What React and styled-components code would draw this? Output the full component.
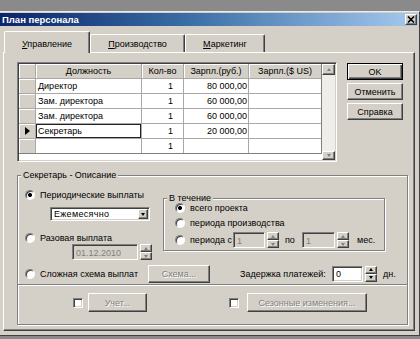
import React from 'react'
import styled, { createGlobalStyle, css } from 'styled-components'

const FACE = '#d4d0c8'
const SHADOW = '#808080'
const DARK = '#404040'
const LIGHT = '#ffffff'

const GlobalStyle = createGlobalStyle`
  html, body {
    margin: 0;
    padding: 0;
  }
  body {
    background: #8a8a8a;
    font-family: "Liberation Sans", Arial, sans-serif;
    font-size: 9px;
    color: #000;
  }
`

const raised = css`
  border: 1px solid;
  border-color: ${LIGHT} ${DARK} ${DARK} ${LIGHT};
  box-shadow: inset -1px -1px 0 ${SHADOW};
`

const sunken = css`
  border: 1px solid;
  border-color: ${SHADOW} ${LIGHT} ${LIGHT} ${SHADOW};
  box-shadow: inset 1px 1px 0 ${DARK}, inset -1px -1px 0 ${FACE};
`

const Screen = styled.div`
  width: 420px;
  height: 339px;
  box-sizing: border-box;
  padding-top: 11px;
  background: #8a8a8a;
  overflow: hidden;
`

const Window = styled.div`
  box-sizing: border-box;
  height: 325px;
  background: ${FACE};
  border-top: 1px solid #ecebe7;
  border-right: 1px solid ${DARK};
  border-bottom: 1px solid ${DARK};
  padding: 1px 1px 0 0;
`

const TitleBar = styled.div`
  height: 13px;
  display: flex;
  align-items: center;
  justify-content: space-between;
  padding: 0 1px 0 2px;
  background: linear-gradient(to right, #0a246a 0%, #3a6ea5 45%, #a6caf0 100%);
`

const TitleText = styled.span`
  color: #fff;
  font-weight: bold;
  font-size: 9.5px;
  white-space: nowrap;
`

const CloseButton = styled.div`
  box-sizing: border-box;
  width: 12px;
  height: 11px;
  background: ${FACE};
  ${raised};
  display: flex;
  align-items: center;
  justify-content: center;
`

const TabRow = styled.div`
  height: 21px;
  margin-top: 5px;
  padding-left: 4px;
  display: flex;
  align-items: flex-end;
`

const Tab = styled.div`
  box-sizing: border-box;
  width: ${p => p.$w}px;
  height: ${p => (p.$active ? 22 : 18)}px;
  margin-bottom: ${p => (p.$active ? -1 : 0)}px;
  position: relative;
  z-index: ${p => (p.$active ? 1 : 0)};
  display: flex;
  align-items: center;
  justify-content: center;
  padding-top: ${p => (p.$active ? 3 : 1)}px;
  background: ${FACE};
  border-top: 1px solid ${LIGHT};
  border-left: 1px solid ${LIGHT};
  border-right: 1px solid ${DARK};
  box-shadow: inset -1px 0 0 ${SHADOW};
  border-radius: 2px 2px 0 0;
  white-space: nowrap;
`

const Panel = styled.div`
  box-sizing: border-box;
  height: 279px;
  margin: 0 3px 0 3px;
  ${raised};
  padding: 9px 5px 0 13px;
`

const TopRow = styled.div`
  display: flex;
  align-items: flex-start;
  gap: 10px;
`

const DataGrid = styled.div`
  box-sizing: border-box;
  width: 320px;
  height: 100px;
  padding: 1px;
  background: #fff;
  ${sunken};
  display: flex;
`

const Table = styled.div`
  width: 303px;
  box-sizing: border-box;
  align-self: flex-start;
  display: grid;
  grid-template-columns: 16px 105px 41px 64px 72px;
  grid-auto-rows: 14px;
  gap: 1px;
  background: #a8a8a8;
  border-right: 1px solid ${SHADOW};
  border-bottom: 1px solid ${SHADOW};
`

const HeadCell = styled.div`
  background: ${FACE};
  box-shadow: inset 1px 1px 0 ${LIGHT};
  display: flex;
  align-items: center;
  justify-content: center;
  white-space: nowrap;
  overflow: hidden;
`

const Cell = styled.div`
  background: #fff;
  display: flex;
  align-items: center;
  justify-content: ${p => (p.$right ? 'flex-end' : 'flex-start')};
  padding: 0 ${p => p.$pr ?? 2}px 0 2px;
  white-space: nowrap;
  overflow: hidden;
  ${p => p.$focus && css`box-shadow: inset 0 0 0 1px #222;`}
`

const ScrollBar = styled.div`
  width: 13px;
  background: #efeeea;
  display: flex;
  flex-direction: column;
  justify-content: space-between;
`

const ArrowBtn = styled.div`
  box-sizing: border-box;
  height: ${p => p.$h ?? 11}px;
  width: ${p => (p.$w ? `${p.$w}px` : 'auto')};
  flex: ${p => (p.$grow ? 1 : 'none')};
  background: ${FACE};
  ${raised};
  display: flex;
  align-items: center;
  justify-content: center;
  &::after {
    content: '';
    border-left: 2.5px solid transparent;
    border-right: 2.5px solid transparent;
    ${p => (p.$down
      ? css`border-top: 3px solid ${p.$off ? SHADOW : '#000'};`
      : css`border-bottom: 3px solid ${p.$off ? SHADOW : '#000'};`)}
  }
`

const ButtonColumn = styled.div`
  width: 56px;
  margin-top: 1px;
  display: flex;
  flex-direction: column;
  gap: 3px;
`

const Button = styled.button`
  box-sizing: border-box;
  width: ${p => p.$w}px;
  height: ${p => p.$h ?? 17}px;
  flex: none;
  padding: 0;
  font: inherit;
  background: ${FACE};
  ${raised};
  color: ${p => (p.disabled ? SHADOW : '#000')};
  text-shadow: ${p => (p.disabled ? `1px 1px 0 ${LIGHT}` : 'none')};
  white-space: nowrap;
  ${p => p.$default && css`
    border-color: #000;
    box-shadow: inset 1px 1px 0 ${LIGHT}, inset -1px -1px 0 ${DARK}, inset -2px -2px 0 ${SHADOW};
  `}
`

const GroupBox = styled.fieldset`
  box-sizing: border-box;
  width: ${p => p.$w}px;
  min-width: 0;
  margin: ${p => p.$mt}px 0 0 0;
  padding: 0;
  border: 1px solid ${SHADOW};
  box-shadow: 1px 1px 0 ${LIGHT}, inset 1px 1px 0 ${LIGHT};
`

const Legend = styled.legend`
  margin-left: 3px;
  padding: 0 2px;
  line-height: ${p => p.$lh}px;
  background: ${FACE};
  white-space: nowrap;
`

const TopArea = styled.div`
  display: flex;
  align-items: flex-start;
  padding: 8px 0 0 7px;
`

const LeftCol = styled.div`
  width: 138px;
  display: flex;
  flex-direction: column;
  align-items: flex-start;
`

const RadioRow = styled.div`
  display: flex;
  align-items: center;
  gap: 5px;
  height: ${p => p.$h ?? 12}px;
  margin-top: ${p => p.$mt ?? 0}px;
  width: ${p => (p.$w ? `${p.$w}px` : 'auto')};
  flex: none;
  white-space: nowrap;
`

const Radio = styled.span`
  box-sizing: border-box;
  width: 10px;
  height: 10px;
  flex: none;
  border-radius: 50%;
  border: 1px solid;
  border-color: ${SHADOW} ${LIGHT} ${LIGHT} ${SHADOW};
  box-shadow: inset 1px 1px 0 ${DARK};
  background: ${p => (p.$checked
    ? 'radial-gradient(circle at 50% 50%, #000 0 1.7px, #fff 2.3px)'
    : '#fff')};
`

const SelectBox = styled.div`
  box-sizing: border-box;
  width: 100px;
  height: 14px;
  margin: 6px 0 0 25px;
  padding: 1px;
  background: #fff;
  ${sunken};
  display: flex;
  align-items: stretch;
`

const SelectText = styled.span`
  flex: 1;
  display: flex;
  align-items: center;
  padding-left: 2px;
  letter-spacing: 0.3px;
`

const SpinGroup = styled.div`
  display: flex;
  gap: 2px;
  flex: none;
  margin: ${p => p.$m ?? '0'};
`

const Field = styled.div`
  box-sizing: border-box;
  width: ${p => p.$w}px;
  height: 16px;
  padding: 1px 3px 0;
  background: ${p => (p.$off ? FACE : '#fff')};
  color: ${p => (p.$off ? SHADOW : '#000')};
  ${sunken};
  display: flex;
  align-items: center;
`

const Spinner = styled.div`
  width: 12px;
  height: 16px;
  display: flex;
  flex-direction: column;
`

const InnerArea = styled.div`
  display: flex;
  flex-direction: column;
  padding: 0 0 2px 11px;
`

const Text = styled.span`
  flex: none;
  width: ${p => (p.$w ? `${p.$w}px` : 'auto')};
  margin-left: ${p => p.$ml ?? 0}px;
  white-space: nowrap;
`

const SchemeRow = styled.div`
  display: flex;
  align-items: center;
  height: 19px;
  margin-top: 4px;
  padding-left: 7px;
`

const BottomSection = styled.div`
  margin-top: 1px;
  border-top: 1px solid ${SHADOW};
  box-shadow: inset 0 1px 0 ${LIGHT};
  padding: 8px 0 12px 55px;
  display: flex;
  align-items: center;
`

const CheckBox = styled.span`
  box-sizing: border-box;
  width: 10px;
  height: 10px;
  flex: none;
  margin-right: ${p => p.$mr}px;
  margin-left: ${p => p.$ml ?? 0}px;
  background: #fff;
  ${sunken};
`

const rows = [
  { name: 'Директор', qty: '1', rub: '80 000,00' },
  { name: 'Зам. директора', qty: '1', rub: '60 000,00' },
  { name: 'Зам. директора', qty: '1', rub: '60 000,00' },
  { name: 'Секретарь', qty: '1', rub: '20 000,00', current: true },
  { name: '', qty: '1', rub: '' },
]

const CloseIcon = () => (
  <svg width="8" height="7" viewBox="0 0 8 7">
    <path d="M1 0.5 L7 6.5 M7 0.5 L1 6.5" stroke="#000" strokeWidth="1.6" />
  </svg>
)

const RowArrow = () => (
  <svg width="5" height="8" viewBox="0 0 5 8">
    <polygon points="0,0 5,4 0,8" fill="#000" />
  </svg>
)

const Spin = ({ off }) => (
  <Spinner>
    <ArrowBtn $grow $off={off} />
    <ArrowBtn $grow $down $off={off} />
  </Spinner>
)

export default function App() {
  return (
    <Screen>
      <GlobalStyle />
      <Window>
        <TitleBar>
          <TitleText>План персонала</TitleText>
          <CloseButton><CloseIcon /></CloseButton>
        </TitleBar>

        <TabRow>
          <Tab $w={86} $active><span><u>У</u>правление</span></Tab>
          <Tab $w={95}><span><u>П</u>роизводство</span></Tab>
          <Tab $w={80}><span><u>М</u>аркетинг</span></Tab>
        </TabRow>

        <Panel>
          <TopRow>
            <DataGrid>
              <Table>
                <HeadCell />
                <HeadCell>Должность</HeadCell>
                <HeadCell>Кол-во</HeadCell>
                <HeadCell>Зарпл.(руб.)</HeadCell>
                <HeadCell>Зарпл.($ US)</HeadCell>
                {rows.map((r, i) => (
                  <React.Fragment key={i}>
                    <HeadCell>{r.current && <RowArrow />}</HeadCell>
                    <Cell $focus={r.current}>{r.name}</Cell>
                    <Cell $right $pr={10}>{r.qty}</Cell>
                    <Cell $right $pr={1}>{r.rub}</Cell>
                    <Cell />
                  </React.Fragment>
                ))}
              </Table>
              <ScrollBar>
                <ArrowBtn $off />
                <ArrowBtn $off $down $h={9} />
              </ScrollBar>
            </DataGrid>

            <ButtonColumn>
              <Button $w={56} $default>OK</Button>
              <Button $w={56}>Отменить</Button>
              <Button $w={56}>Справка</Button>
            </ButtonColumn>
          </TopRow>

          <GroupBox $w={391} $mt={7}>
            <Legend $lh={12}>Секретарь - Описание</Legend>
            <TopArea>
              <LeftCol>
                <RadioRow>
                  <Radio $checked />
                  <span>Периодические выплаты</span>
                </RadioRow>
                <SelectBox>
                  <SelectText>Ежемесячно</SelectText>
                  <ArrowBtn $down $h={10} $w={10} />
                </SelectBox>
                <RadioRow $mt={11}>
                  <Radio />
                  <span>Разовая выплата</span>
                </RadioRow>
                <SpinGroup $m="0 0 0 47px">
                  <Field $w={66} $off>01.12.2010</Field>
                  <Spin off />
                </SpinGroup>
              </LeftCol>

              <GroupBox $w={222} $mt={4}>
                <Legend $lh={10}>В течение</Legend>
                <InnerArea>
                  <RadioRow $h={10}>
                    <Radio $checked />
                    <span>всего проекта</span>
                  </RadioRow>
                  <RadioRow $h={10} $mt={5}>
                    <Radio />
                    <span>периода производства</span>
                  </RadioRow>
                  <RadioRow $h={16} $mt={4}>
                    <Radio />
                    <Text $w={38}>периода с</Text>
                    <SpinGroup>
                      <Field $w={32} $off>1</Field>
                      <Spin off />
                    </SpinGroup>
                    <Text $w={12} $ml={1}>по</Text>
                    <SpinGroup>
                      <Field $w={33} $off>1</Field>
                      <Spin off />
                    </SpinGroup>
                    <Text $ml={3}>мес.</Text>
                  </RadioRow>
                </InnerArea>
              </GroupBox>
            </TopArea>

            <SchemeRow>
              <RadioRow $w={123}>
                <Radio />
                <span>Сложная схема выплат</span>
              </RadioRow>
              <Button $w={62} $h={18} disabled>Схема...</Button>
              <Text $w={92} $ml={30}>Задержка платежей:</Text>
              <SpinGroup>
                <Field $w={31}>0</Field>
                <Spin />
              </SpinGroup>
              <Text $ml={6}>дн.</Text>
            </SchemeRow>

            <BottomSection>
              <CheckBox $mr={5} />
              <Button $w={59} $h={19} disabled>Учет...</Button>
              <CheckBox $ml={82} $mr={8} />
              <Button $w={120} $h={19} disabled>Сезонные изменения...</Button>
            </BottomSection>
          </GroupBox>
        </Panel>
      </Window>
    </Screen>
  )
}
